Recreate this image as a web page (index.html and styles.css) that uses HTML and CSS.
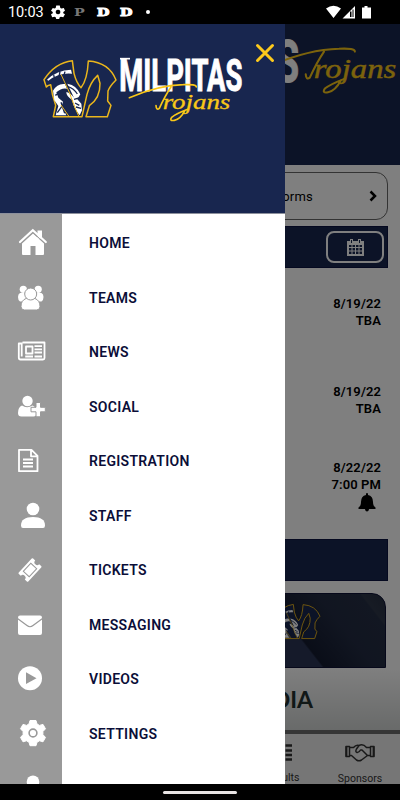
FILE: index.html
```
<!DOCTYPE html>
<html lang="en">
<head>
    <meta charset="UTF-8">
    <meta name="viewport" content="width=device-width, initial-scale=1.0">
    <title>Milpitas Trojans</title>
    <link rel="stylesheet" href="styles.css">
</head>
<body>
    <!-- Shared logo parts -->
    <svg class="defs" width="0" height="0">
        <symbol id="logo-m" viewBox="22 40 226 182">
            <path d="M27 104 Q60 53 112 47 L117 85 Q124 113 138 128 Q157 105 160 48 Q222 52 243 105 Q224 124 219 138 L218 168 L228 181 L217 215 L153 215 L163 182 Q196 160 195 115 L188 91 Q166 111 156 148 L141 215 L55 215 L62 181 Q51 151 47 119 Q37 121 34 126Z" fill="#18264f" stroke="#eab61c" stroke-width="4.5" stroke-linejoin="round"/>
            <path d="M36 104 Q66 75 108 74 L111 86 Q73 82 40 107Z" fill="#fff"/>
            <path d="M54 137 Q67 114 90 117 L96 131 Q80 127 64 142 L70 158 L84 170 L80 184 L94 211 L62 211 L70 183 L58 166Z" fill="#fff"/>
            <path d="M97 116 Q126 121 136 148 L127 163 L139 176 L141 196 L134 211 Q114 188 112 165 Q93 153 94 141 Q108 145 117 158" fill="#fff"/>
            <path d="M72 94 l3 -14 M87 90 l3 -10 M58 98 l-2 -8 M61 151 l22 -14 M78 172 l11 33 M67 203 l13 -18 M99 125 q17 5 28 22 M120 174 l13 7 M117 163 l15 -4 M123 186 l15 4" fill="none" stroke="#18264f" stroke-width="4"/>
            <path d="M78 88 Q88 110 104 144 Q112 170 131 213 M78 180 L101 213" fill="none" stroke="#eab61c" stroke-width="3"/>
        </symbol>
        <symbol id="logo-trojans" viewBox="275 110 325 125">
            <path d="M283 158 Q370 121 445 119 Q484 117 484 126 M408 126 Q391 151 373 190 Q364 197 363 182" fill="none" stroke="#f9c718" stroke-width="5" stroke-linecap="round" stroke-linejoin="round"/>
            <text class="logo-script" x="383" y="191" textLength="203" lengthAdjust="spacingAndGlyphs">rojans</text>
            <path d="M458 193 Q424 206 410 217 Q402 229 418 226 Q436 223 450 196" fill="none" stroke="#f9c718" stroke-width="5" stroke-linecap="round"/>
        </symbol>
    </svg>

    <div class="phone">
        <div class="status-bar">
            <span class="status-time">10:03</span>
            <svg class="status-gear" width="14" height="14" viewBox="0 0 24 24"><path fill="#fff" fill-rule="evenodd" d="M9 1h6l1 4 2 1 4-1 2 5-3 2v2l3 2-3 5-4-1-2 1-1 3H9l-1-3-2-1-4 1-2-5 3-2v-2l-3-2 3-5 3 1 2-1zM12 8a4 4 0 1 0 .1 0z"/></svg>
            <span class="status-letter dim">P</span>
            <span class="status-letter">D</span>
            <span class="status-letter">D</span>
            <span class="status-dot"></span>
            <svg class="status-icons" width="46" height="15" viewBox="0 0 46 15">
                <path fill="#fff" d="M0 3.5Q7.5-2 15 3.5L7.5 13zM29 1v12.500H16.500zM36 2.500h2.500V1h3v1.500H45v11h-9z"/>
                <path fill="#000" d="M24 6.500h1.500V12H24zM26.500 4.500h1V12h-1z"/>
            </svg>
        </div>

        <div class="screen">
            <!-- Home page under the menu -->
            <div class="page">
                <header class="page-header">
                    <svg width="400" height="141" viewBox="0 0 400 141">
                        <text class="page-wordmark" x="129" y="58" textLength="170" lengthAdjust="spacingAndGlyphs">MILPITAS</text>
                        <use href="#logo-trojans" x="270" y="21" width="132" height="51"/>
                    </svg>
                </header>

                <div class="forms-card">
                    <span>Athletic Forms</span>
                    <svg width="8" height="12" viewBox="0 0 8 12"><path d="M1.500 1.500L6 6l-4.500 4.500" fill="none" stroke="#000" stroke-width="2.500"/></svg>
                </div>

                <div class="section-bar">
                    <button class="calendar-btn">
                        <svg width="17" height="18" viewBox="0 0 17 18">
                            <path fill="#fff" fill-rule="evenodd" d="M1 3h2V1h3v2h5V1h3v2h3v15H0V3zM2 7v2h2.500V7zM5.500 7v2H8V7zM9 7v2h2.500V7zM12.500 7v2H15V7zM2 10v2.500h2.500V10zM5.500 10v2.500H8V10zM9 10v2.500h2.500V10zM12.500 10v2.500H15V10zM2 13.500V16h2.500v-2.500zM5.500 13.500V16H8v-2.500zM9 13.500V16h2.500v-2.500zM12.500 13.500V16H15v-2.500z"/>
                            <path d="M4.500 2v3M12.500 2v3" stroke="#18264f" stroke-width="1"/>
                        </svg>
                    </button>
                </div>

                <div class="games">
                    <div class="game">8/19/22<br>TBA</div>
                    <div class="game">8/19/22<br>TBA</div>
                    <div class="game game-next">8/22/22<br>7:00 PM
                        <svg width="18" height="19" viewBox="0 0 18 19"><path d="M8 1a1 1 0 0 1 2 0v1q5 1 5 7 0 4 2.500 5.500V16H11a2 2 0 0 1-4 0H.5v-1.500Q3 13 3 9q0-6 5-7zM7 16.500h4q-.5 2-2 2t-2-2z"/></svg>
                    </div>
                </div>

                <div class="section-bar"></div>

                <div class="promo">
                    <svg width="46" height="37"><use href="#logo-m" width="46" height="37"/></svg>
                </div>
                <div class="media-title"><span>MEDIA</span></div>

                <nav class="tabs">
                    <div class="tab">
                        <svg width="20" height="18" viewBox="0 0 20 18"><path d="M0 2.500h20M0 7.500h20M0 12h20M0 16.500h20" stroke="#333" stroke-width="2.500"/><path d="M13 0v18" stroke="#ececec"/></svg>
                        <span>Results</span>
                    </div>
                    <div class="tab">
                        <svg width="30" height="19" viewBox="0 0 30 19" fill="none" stroke="#333" stroke-width="1.500" stroke-linejoin="round" stroke-linecap="round">
                            <path d="M1 3.500h3.500v10H1zM25.500 3.500H29v10h-3.500zM4.500 4.500h4Q11 1.500 14 2.500L11.500 6q-1.500 3 .5 3.500 2 .3 3.500-2.500h1.500l5 5M14 2.500q4-2 7.500 2h4M4.500 12.500h2l5 4.500q2.500 1.500 5 0l6-4.500h3"/>
                            <path d="M1.500 4v9M28.500 4v9" stroke-width="1.800"/>
                        </svg>
                        <span>Sponsors</span>
                    </div>
                </nav>
            </div>

            <div class="scrim"></div>

            <!-- Side menu -->
            <aside class="drawer">
                <div class="drawer-header">
                    <svg class="drawer-logo" width="215" height="85" viewBox="0 0 645 255">
                        <use href="#logo-m" x="22" y="40" width="226" height="182"/>
                        <text class="logo-wordmark" x="253" y="137" textLength="369" lengthAdjust="spacingAndGlyphs">MILPITAS</text>
                        <path d="M255 41h30" stroke="#fff" stroke-width="5"/>
                        <use href="#logo-trojans" x="275" y="110" width="325" height="125"/>
                    </svg>
                    <svg class="drawer-close" width="20" height="20" viewBox="0 0 20 20"><path d="M2.500 2.500l15 15M17.500 2.500l-15 15" stroke="#fdc91c" stroke-width="3" stroke-linecap="round"/></svg>
                </div>

                <ul class="menu">
                    <li class="menu-item">
                        <svg class="menu-icon" viewBox="0 0 62 54"><path d="M37.500 14.500h4.500v8h-4.500z"/><path d="M22 27.500L33 17.500l11 10V38q0 1-1 1h-7.500v-9h-5v9H23q-1 0-1-1z"/><path class="gap" d="M20 28l12.800-11.500L46 28"/><path class="line" d="M20 26L32.800 14.300 45.800 26"/></svg>
                        <span>HOME</span>
                    </li>
                    <li class="menu-item">
                        <svg class="menu-icon" viewBox="0 0 62 54"><circle cx="23.300" cy="18.300" r="3.600"/><circle cx="38.200" cy="18.300" r="3.600"/><path d="M20 22h4.500l2 6-3 2.500H20q-2-1-2-4.500 0-3 2-4zM41.500 22H37l-2 6 3 2.500h3.500q2-1 2-4.500 0-3-2-4z"/><path class="cut" d="M26 27.500q-5 2-5 8 0 3.500 3.500 3.500h12q3.500 0 3.500-3.500 0-6-5-8z"/><circle class="cut" cx="30.700" cy="23" r="6"/></svg>
                        <span>TEAMS</span>
                    </li>
                    <li class="menu-item">
                        <svg class="menu-icon" viewBox="0 0 62 54"><path class="thin" d="M22.500 17.500H44.500V33q0 1.500-1.500 1.500H20.500q-1.700 0-1.700-2V18.500h3.700M21.700 19v12.500M26 21.500h6.500v7H26zM34.500 21.200H42M34.500 24.300H42M34.500 27.500H42M25.200 31.500h7.800M34.500 31.500H42"/></svg>
                        <span>NEWS</span>
                    </li>
                    <li class="menu-item">
                        <svg class="menu-icon" viewBox="0 0 62 54"><path d="M22 25.500q5 3.500 10.500 0 4 1.500 4 7.500 0 3.500-3 3.500H21.500q-3.500 0-3.500-3.500 0-6 4-7.500z"/><circle cx="27.500" cy="21" r="5.200"/><path class="cut" d="M36 22.500h4.500v4.800h4.800v4.500h-4.800v5H36v-5h-5v-4.500h5z"/></svg>
                        <span>SOCIAL</span>
                    </li>
                    <li class="menu-item">
                        <svg class="menu-icon" viewBox="0 0 62 54"><path class="thin" d="M19 15.800h12.500l6 6V37.200H19zM31 16v6.300h6.500M23 25.500h10M23 29h10M23 32.500h10"/></svg>
                        <span>REGISTRATION</span>
                    </li>
                    <li class="menu-item">
                        <svg class="menu-icon" viewBox="0 0 62 54"><circle cx="33" cy="20" r="6.300"/><path d="M21 36.500q0-8.500 12-8.500t12 8.500q0 2.500-2 2.500H23q-2 0-2-2.500z"/></svg>
                        <span>STAFF</span>
                    </li>
                    <li class="menu-item">
                        <svg class="menu-icon" viewBox="0 0 62 54"><g transform="rotate(-47 30 27)"><path d="M20.500 20.500h19q1 0 1 1v2.800a2.700 2.700 0 0 0 0 5.400v2.800q0 1-1 1h-19q-1 0-1-1v-2.800a2.700 2.700 0 0 0 0-5.400v-2.800q0-1 1-1z"/><path d="M24.500 23h11v8h-11z" fill="none" stroke="#999" stroke-width="1"/></g></svg>
                        <span>TICKETS</span>
                    </li>
                    <li class="menu-item">
                        <svg class="menu-icon" viewBox="0 0 62 54"><rect x="18" y="17.500" width="24" height="19.500" rx="2"/><path d="M17.500 20.500l9.500 7q3 2.500 6 0l9.500-7" fill="none" stroke="#999" stroke-width="1.200"/></svg>
                        <span>MESSAGING</span>
                    </li>
                    <li class="menu-item">
                        <svg class="menu-icon" viewBox="0 0 62 54"><circle cx="30" cy="26.300" r="12"/><path fill="#999" d="M26 20.300l10.500 6L26 32z"/></svg>
                        <span>VIDEOS</span>
                    </li>
                    <li class="menu-item">
                        <svg class="menu-icon" viewBox="0 0 62 54"><path stroke="#fff" stroke-linejoin="round" d="M30 13.500h6l1 3.500 2.500 1.400 3.500-1 2.500 4.400-2.600 2.800v3l2.600 2.800-2.500 4.400-3.500-1-2.500 1.400-1 3.500h-6l-1-3.500-2.500-1.400-3.500 1-2.500-4.400 2.600-2.800v-3l-2.600-2.800 2.500-4.400 3.500 1 2.500-1.400z"/><circle cx="33" cy="26" r="3.900" fill="none" stroke="#999" stroke-width="1.600"/></svg>
                        <span>SETTINGS</span>
                    </li>
                    <li class="menu-item">
                        <svg class="menu-icon" viewBox="0 0 62 54"><circle cx="33" cy="20.800" r="6.300"/><path d="M21 37q0-8.500 12-8.500t12 8.500z"/></svg>
                    </li>
                </ul>
            </aside>
        </div>

        <div class="nav-bar"><span class="nav-handle"></span></div>
    </div>
</body>
</html>
```
FILE: styles.css
```
* {
    margin: 0;
    padding: 0;
    box-sizing: border-box;
}

body {
    font-family: Roboto, 'Liberation Sans', sans-serif;
    background: #000;
    overflow: hidden;
}

svg {
    display: block;
    flex-shrink: 0;
}

.defs {
    position: absolute;
}

.phone {
    width: 400px;
    height: 800px;
    display: flex;
    flex-direction: column;
}

/* Status bar */
.status-bar {
    height: 24px;
    display: flex;
    align-items: center;
    padding: 0 28px 0 8px;
    background: #000;
    color: #fff;
}

.status-time {
    width: 43px;
    font-size: 14.5px;
    letter-spacing: -0.1px;
    padding-top: 1px;
}

.status-gear {
    margin-right: 9px;
}

.status-letter {
    width: 23px;
    font-family: 'DejaVu Serif', serif;
    font-size: 11px;
    font-weight: 900;
    -webkit-text-stroke: 1px #fff;
    transform: scaleX(1.3);
    transform-origin: left;
}

.status-letter.dim {
    color: #777;
    -webkit-text-stroke: 0;
}

.status-dot {
    width: 4px;
    height: 4px;
    margin-left: 3px;
    border-radius: 50%;
    background: #fff;
}

.status-icons {
    margin-left: auto;
    margin-top: 1px;
}

.screen {
    position: relative;
    height: 760px;
    overflow: hidden;
}

/* Page under the menu */
.page {
    height: 760px;
    display: flex;
    flex-direction: column;
    background: #fff;
}

.page-header {
    height: 141px;
    background: #18264f;
    flex-shrink: 0;
}

.page-wordmark,
.logo-wordmark {
    font-weight: 700;
    fill: #fff;
    stroke: #fff;
}

.logo-wordmark {
    font-size: 134px;
    stroke-width: 3px;
}

.page-wordmark {
    font-size: 59px;
    stroke-width: 1px;
}

.logo-script {
    font-family: 'Liberation Serif', serif;
    font-style: italic;
    font-size: 66px;
    fill: #f9c718;
    stroke: #f9c718;
    stroke-width: 1px;
}

.forms-card {
    height: 48px;
    margin: 7px 12px 0;
    padding: 0 10px 0 0;
    display: flex;
    align-items: center;
    justify-content: space-between;
    border: 1px solid #666;
    border-radius: 12px;
    font-size: 13px;
    flex-shrink: 0;
}

.forms-card span {
    width: 300px;
    text-align: right;
    letter-spacing: 0.2px;
}

.section-bar {
    height: 42px;
    margin: 6px 12px 0;
    padding-right: 3px;
    display: flex;
    align-items: center;
    justify-content: flex-end;
    background: #18264f;
    border: 1px solid #0b1340;
    flex-shrink: 0;
}

.calendar-btn {
    width: 58px;
    height: 32px;
    display: flex;
    align-items: center;
    justify-content: center;
    background: none;
    border: 2px solid #fff;
    border-radius: 8px;
}

.games {
    height: 265px;
    padding: 27px 19px 0 0;
    text-align: right;
    font-size: 13px;
    font-weight: 600;
    line-height: 17px;
    letter-spacing: 0.1px;
}

.game {
    height: 88px;
}

.game + .game-next {
    margin-top: -12px;
}

.game-next svg {
    margin: 0 5px 0 auto;
}

.promo {
    width: 374px;
    height: 75px;
    margin: 12px 0 0 12px;
    padding: 9px 0 0 262px;
    border: 1px solid #0c1034;
    border-radius: 14px 14px 0 0;
    background: linear-gradient(52deg, #2a3554 72%, #141b30 72.5%, #222b42 84%, #252e44 94%, #2e3749 94.5%, #262e40);
    flex-shrink: 0;
}

.media-title {
    height: 62px;
    padding: 17px 87px 0 0;
    text-align: right;
    font-family: Lato, sans-serif;
    font-size: 23px;
    font-weight: 700;
    color: #23302f;
    background: linear-gradient(#fff, #d2d5d4);
    flex-shrink: 0;
}

/* Bottom tabs */
.tabs {
    height: 55px;
    display: flex;
    justify-content: flex-end;
    padding-right: 1px;
    border-top: 4px solid #6c6c6c;
    background: #ececec;
    color: #333;
    font-size: 10.5px;
    flex-shrink: 0;
}

.tab {
    width: 78px;
    display: flex;
    flex-direction: column;
    align-items: center;
    padding-top: 9px;
    gap: 10px;
}

.scrim {
    position: absolute;
    inset: 0;
    background: rgba(0, 0, 0, 0.5);
}

/* Drawer */
.drawer {
    position: absolute;
    top: 0;
    left: 0;
    width: 285px;
    height: 760px;
    display: flex;
    flex-direction: column;
    background: #fff;
    overflow: hidden;
}

.drawer-header {
    height: 190px;
    display: flex;
    align-items: flex-start;
    padding: 18px 0 0 35px;
    background: #18264f;
    border-bottom: 1px solid #8c909c;
    flex-shrink: 0;
}

.drawer-logo {
    margin-top: 3px;
}

.drawer-close {
    margin-left: 5px;
    margin-top: 1px;
}

.menu {
    list-style: none;
    padding-top: 2px;
    background: linear-gradient(to right, #999 62px, #fff 62px);
    flex-shrink: 0;
}

.menu-item {
    height: 54.55px;
    display: flex;
    align-items: flex-start;
    gap: 27px;
    color: #0b0e38;
    font-size: 14px;
    font-weight: 600;
    line-height: 54px;
    letter-spacing: 0.3px;
}

.menu-icon {
    width: 62px;
    height: 54px;
    fill: #fff;
}

.menu-icon .line {
    fill: none;
    stroke: #fff;
    stroke-width: 2.2;
    stroke-linecap: round;
}

.menu-icon .gap {
    fill: none;
    stroke: #999;
    stroke-width: 1;
}

.menu-icon .thin {
    fill: none;
    stroke: #fff;
    stroke-width: 1.8;
    stroke-linejoin: round;
}

.menu-icon .cut {
    stroke: #999;
    stroke-width: 1;
}

/* System navigation */
.nav-bar {
    height: 16px;
    display: flex;
    justify-content: center;
    align-items: center;
    background: #000;
}

.nav-handle {
    width: 74px;
    height: 3px;
    margin-top: 1px;
    border-radius: 2px;
    background: #e8e4e4;
}
```
